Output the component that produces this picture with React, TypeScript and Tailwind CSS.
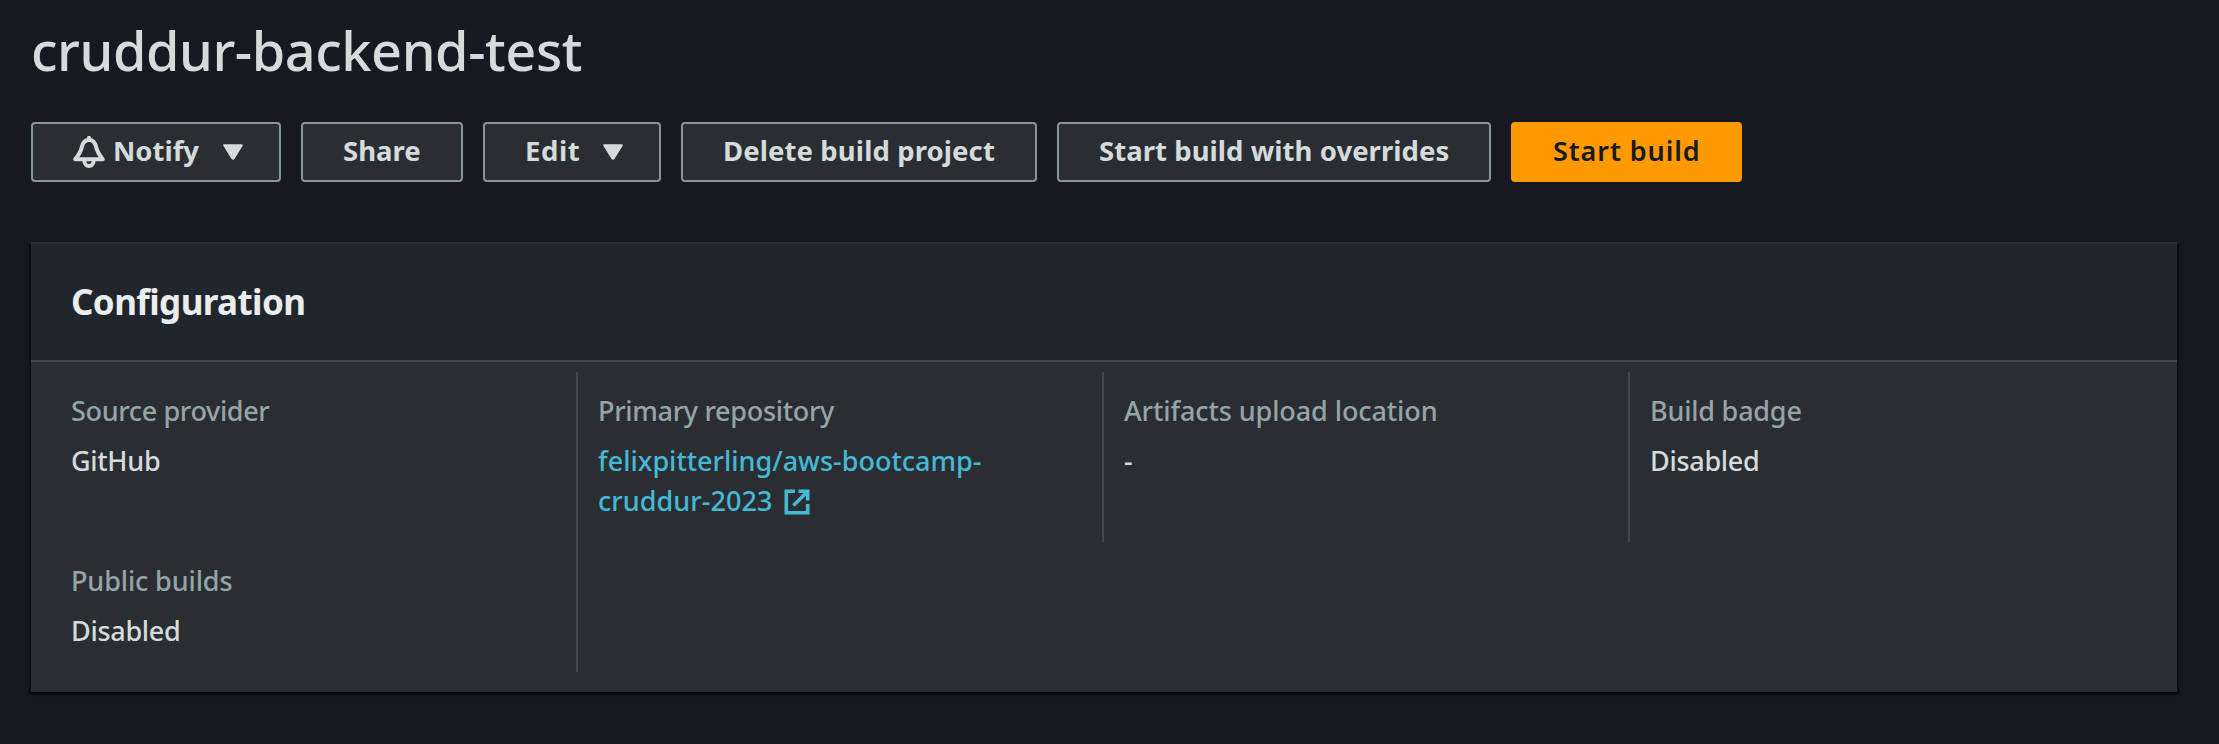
import type { ReactNode } from "react";

function Caret() {
  return (
    <svg className="block h-4 w-5" viewBox="0 0 20 16">
      <path d="M1.200 1.200h17.600L10.800 14.200Q10 15.400 9.200 14.200z" fill="currentColor" stroke="currentColor" strokeWidth="2" strokeLinejoin="round" />
    </svg>
  );
}

function Bell() {
  return (
    <svg className="block h-8 w-8" viewBox="0 0 32 32" fill="none" stroke="currentColor" strokeLinejoin="round">
      <path d="M16 3.8C11.6 4.400 9.800 7 9 10.500C7.800 16 6.500 18.200 2.200 23.200H29.800C25.500 18.200 24.200 16 23 10.500C22.200 7 20.400 4.400 16 3.800Z" strokeWidth="4" />
      <path d="M16 1.800V4" strokeWidth="4" strokeLinecap="round" />
      <path d="M11.300 24.500a4.700 5.500 0 0 0 9.400 0" strokeWidth="4" />
    </svg>
  );
}

function ExternalIcon() {
  return (
    <svg className="ml-3 inline-block h-[26px] w-[26px] align-[-4px]" viewBox="0 0 26 26" fill="none" stroke="currentColor" strokeWidth="3.6">
      <path d="M11 2.300H2.300V23.700H23.700V15" />
      <path d="M14.500 2.300H23.700V11.500" />
      <path d="M9.500 16.500L23 3" />
    </svg>
  );
}

function Button({ className, children }: { className: string; children: ReactNode }) {
  return (
    <button
      className={`flex h-[60px] shrink-0 items-center whitespace-nowrap rounded-[4px] border-2 border-[#879596] bg-[#2a2e33] pb-[2px] pl-10 text-[27.5px] font-bold text-[#d5dbdb] ${className}`}
    >
      {children}
    </button>
  );
}

function Field({ label, className = "", labelClass = "", children }: { label: string; className?: string; labelClass?: string; children: ReactNode }) {
  return (
    <div className={`pt-[19px] pb-[21px] pl-5 leading-10 ${className}`}>
      <div className={`text-[#95a5a6] ${labelClass}`}>{label}</div>
      <div className="mt-[10px]">{children}</div>
    </div>
  );
}

export default function App() {
  return (
    <main className="h-[744px] w-full overflow-hidden bg-[#16191f] pt-5 pr-[42px] pl-[31px] font-['Noto_Sans','Open_Sans',sans-serif] text-[27px] font-medium text-[#d5dbdb]">
      <h1 className="text-[54px] leading-[60px] font-medium tracking-[-0.43px]">cruddur-backend-test</h1>

      <div className="mt-[42px] flex gap-5">
        <Button className="w-[250px]">
          <span className="mt-[2px]"><Bell /></span>
          <span className="ml-2 w-[110px] text-left">Notify</span>
          <span className="mt-[2px]"><Caret /></span>
        </Button>
        <Button className="w-[162px]">Share</Button>
        <Button className="w-[178px]">
          <span className="w-[78px] text-left tracking-[0.6px]">Edit</span>
          <span className="mt-[2px]"><Caret /></span>
        </Button>
        <Button className="w-[356px] tracking-[0.1px]">Delete build project</Button>
        <Button className="w-[434px] tracking-[0.05px]">Start build with overrides</Button>
        <button className="flex h-[60px] w-[231px] items-center rounded-[4px] bg-[#ff9900] pb-[1px] pl-[42px] text-[27px] font-semibold tracking-[0.9px] text-[#16191f]">
          Start build
        </button>
      </div>

      <section className="mt-[60px] bg-[#2a2e33] shadow-[0_2px_2px_0_rgba(0,0,0,0.6),2px_2px_2px_0_rgba(0,0,0,0.3),-2px_2px_2px_0_rgba(0,0,0,0.3)]">
        <header className="flex h-[120px] items-center border-t-2 border-b-2 border-t-[#2a2e33] border-b-[#414750] bg-[#21252c] pl-10">
          <h2 className="text-[35px] font-bold tracking-[-0.6px] text-[#eaeded]">Configuration</h2>
        </header>
        <div className="grid grid-cols-[527px_526px_526px_527px] px-5 pt-[10px] pb-5">
          <Field label="Source provider" labelClass="tracking-[-0.35px]" className="border-r-2 border-[#414750]">
            <span className="tracking-[-0.3px]">GitHub</span>
          </Field>
          <Field label="Primary repository" labelClass="tracking-[-0.3px]" className="border-r-2 border-[#414750]">
            <a className="text-[#44b9d6]">
              <span>felixpitterling/aws-bootcamp-</span>
              <br />
              <span className="tracking-[0.04px]">cruddur-2023</span>
              <ExternalIcon />
            </a>
          </Field>
          <Field label="Artifacts upload location" labelClass="tracking-[-0.09px]" className="border-r-2 border-[#414750]">
            -
          </Field>
          <Field label="Build badge" labelClass="tracking-[-0.22px]">
            <span className="tracking-[-0.3px]">Disabled</span>
          </Field>
          <Field label="Public builds" labelClass="tracking-[-0.13px]" className="border-r-2 border-[#414750]">
            <span className="tracking-[-0.3px]">Disabled</span>
          </Field>
        </div>
      </section>
    </main>
  );
}
